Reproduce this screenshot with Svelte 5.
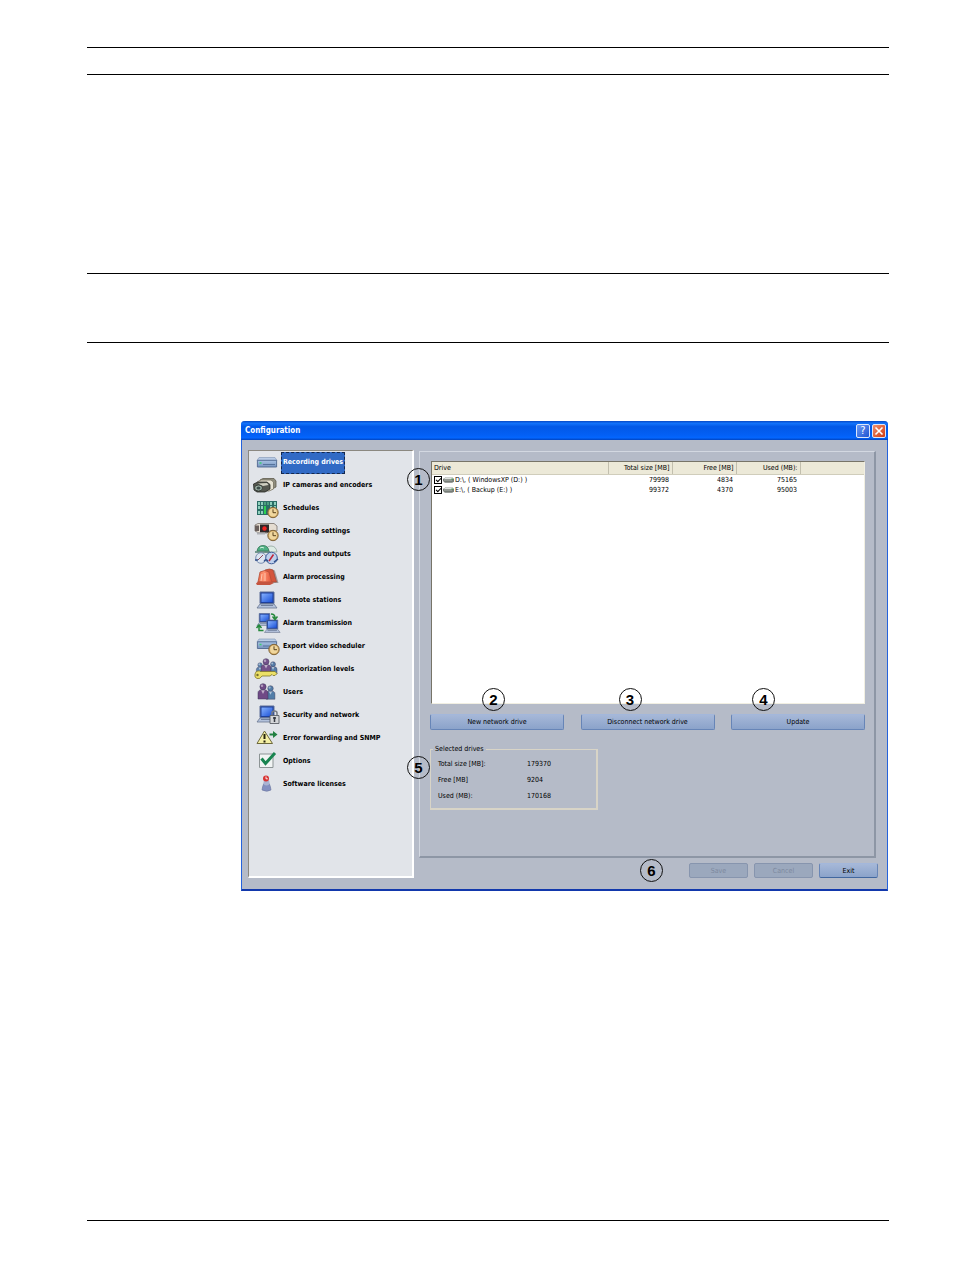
<script>
  const items = [
    ['drive', 'Recording drives'],
    ['cameras', 'IP cameras and encoders'],
    ['schedule', 'Schedules'],
    ['recording', 'Recording settings'],
    ['io', 'Inputs and outputs'],
    ['alarm', 'Alarm processing'],
    ['remote', 'Remote stations'],
    ['transmit', 'Alarm transmission'],
    ['export', 'Export video scheduler'],
    ['auth', 'Authorization levels'],
    ['users', 'Users'],
    ['security', 'Security and network'],
    ['error', 'Error forwarding and SNMP'],
    ['options', 'Options'],
    ['license', 'Software licenses']
  ];
  let selected = $state('drive');
  let drives = $state([
    { name: 'D:\\, ( WindowsXP (D:) )', total: 79998, free: 4834, used: 75165, on: true },
    { name: 'E:\\, ( Backup (E:) )', total: 99372, free: 4370, used: 95003, on: true }
  ]);
  const totals = [
    ['Total size [MB]:', 179370],
    ['Free [MB]', 9204],
    ['Used (MB):', 170168]
  ];
</script>

{#snippet clock(x, y)}
  <g transform="translate({x} {y})">
    <circle r="5.200" fill="#d5ab63" stroke="#80653a" />
    <circle r="3.900" fill="#f0d79e" />
    <path d="M0-3.200V.2H3" fill="none" stroke="#5b431c" />
  </g>
{/snippet}

{#snippet laptop(x, y, s)}
  <g transform="translate({x} {y}) scale({s})">
    <path d="M3 0H17V11.500H3Z" fill="#1d3f9c" stroke="#5d6f98" />
    <path d="M4.500 1.500H15.500V10H4.500Z" fill="url(#screen)" />
    <path d="M3 12H17L20 16H0Z" fill="#b3c2dc" stroke="#6a7690" stroke-width=".8" />
    <path d="M4 13.500H16" stroke="#5f6f8d" stroke-width=".8" />
  </g>
{/snippet}

{#snippet driveBox(y)}
  <g transform="translate(0 {y})">
    <path d="M4 0H20L22 3H2Z" fill="#b9cce6" stroke="#7d93b4" stroke-width=".6" />
    <path d="M2.400 2.800H21.600V9.500H2.400Z" fill="url(#metal)" stroke="#4f688f" stroke-width=".9" />
    <path d="M8 7H20" stroke="#56739c" />
    <path d="M4.500 5.500H6.500" stroke="#36d070" stroke-width="1.500" />
  </g>
{/snippet}

{#snippet person(x, y, s, fill)}
  <g transform="translate({x} {y}) scale({s})">
    <path d="M-4 12V7Q-4 4.500 0 4.500T4 7V12Z" fill={fill} stroke="#3b3556" stroke-width=".4" />
    <circle cy="2.200" r="2.500" fill={fill} stroke="#3b3556" stroke-width=".4" />
    <circle cx="-.8" cy="1.400" r="1" fill="#fff" opacity=".45" />
    <path d="M-1.500 5L0 8L1.500 5Z" fill="#fff" opacity=".55" />
  </g>
{/snippet}

{#snippet icon(name)}
  <svg class="icon" viewBox="-3 0 29 22" aria-hidden="true">
    {#if name === 'drive'}
      {@render driveBox(6.500)}
    {:else if name === 'cameras'}
      <path d="M5 6L8 4.500H19L21 7V13L17 15H7Z" fill="#8f8d7e" stroke="#5f5c4d" stroke-width=".8" />
      <path d="M2 8L6 6H16L18.500 8V15L14 17H5Z" fill="#e6e2d2" stroke="#76715f" stroke-width=".8" />
      <path d="M-1.500 10L3 8H12L15 10.500V15L10 18H2L-1 16Z" fill="#55574f" stroke="#262825" stroke-width=".8" />
      <path d="M3 9.500L12 9L13.500 11L8 12Z" fill="#cfcfc1" />
      <ellipse cx="3.500" cy="14" rx="4" ry="3" fill="#9aaea2" stroke="#2c302c" stroke-width=".8" />
      <ellipse cx="3.500" cy="14" rx="2" ry="1.500" fill="#3c4d4a" />
    {:else if name === 'schedule'}
      <path d="M2 4H22V18H2Z" fill="#2b6d66" />
      <path d="M3 5H5V8H3ZM6 5H8V8H6ZM15 5H17V8H15ZM19 5H21V8H19ZM3 9H5V12H3ZM6 9H8V12H6ZM15 9H17V12H15ZM19 9H21V12H19ZM3 14H5V17H3ZM6 14H8V17H6Z" fill="#8fd0bd" />
      <path d="M9 5H11V8H9ZM12 5H14V8H12Z" fill="#4aa07f" />
      <path d="M9 9H11V17H9Z" fill="#29d052" />
      {@render clock(18, 15.500)}
    {:else if name === 'recording'}
      <path d="M0 5L3 3.500H19L22 6V11H14L12 13H4L0 11Z" fill="#e5ddd2" stroke="#77706a" stroke-width=".8" />
      <path d="M0 5.500H4V11H0Z" fill="#695f5c" />
      <path d="M5 4.500H14V12.500H5Z" fill="#2e2728" />
      <circle cx="9.500" cy="8.500" r="2.200" fill="#f02222" />
      <path d="M2 13.500H10" stroke="#aeb0b5" stroke-width="2" />
      {@render clock(18, 15.500)}
    {:else if name === 'io'}
      <path d="M10 9Q11 3 16 3T22 9Z" fill="#dcebe4" stroke="#8fa49c" stroke-width=".8" />
      <path d="M2 8Q3 2.500 8 2.500T14 8Z" fill="#4fb084" stroke="#397659" stroke-width=".8" />
      <path d="M0 9H15" stroke="#507f70" stroke-width="1.500" />
      <path d="M5 5Q7 3.500 9 5" fill="none" stroke="#d5f4e3" />
      <circle cx="6" cy="15" r="5.300" fill="#dce5f1" stroke="#7d91b3" />
      <circle cx="16.500" cy="15" r="5.800" fill="#bed0ec" stroke="#405e99" />
      <path d="M3 17L8 12" stroke="#8e4b5c" />
      <path d="M14 18L18.500 11.500" stroke="#c22438" stroke-width="1.500" />
      <path d="M9 18.500Q11 15 13 18.500M0 17H3M19 19L23 16" fill="none" stroke="#304f8b" stroke-width="1.500" />
    {:else if name === 'alarm'}
      <path d="M15 17L16 4Q19 3 20 5L23.500 17Z" fill="#a09b9b" />
      <path d="M8 16L10 4Q15 2 18 4L21.500 16Z" fill="#d4553c" stroke="#a24735" stroke-width=".7" />
      <path d="M3 16L5 6Q10 3 14 6L17 17Z" fill="url(#orange)" stroke="#b64e37" stroke-width=".8" />
      <path d="M1 17.500L3 15.500H16L19 17L15 19H2Z" fill="#c4543f" />
      <path d="M7 8L6 15M10 7V15" stroke="#ffc5ac" />
    {:else if name === 'remote'}
      {@render laptop(2, 3, 1)}
    {:else if name === 'transmit'}
      {@render laptop(2, 1.500, 0.75)}
      {@render laptop(9.500, 8, 0.78)}
      <path d="M16 2Q20 2 20 6M17.500 4.500L20 7.500L22.500 4.500M4 14V18.500H8.500M1.500 16L4 13L6.500 16" fill="none" stroke="#24883b" stroke-width="1.500" />
    {:else if name === 'export'}
      {@render driveBox(4)}
      {@render clock(19, 14.500)}
    {:else if name === 'auth'}
      {@render person(5, 5, 0.9, '#5d84ae')}
      {@render person(18, 4, 1, '#547ba7')}
      {@render person(11, 1, 1.200, '#74518a')}
      <path d="M5 13.500H20L22 15.500L20 17.500H18L17 16.500L15 18H7Q5 21.500 2 20.500T0 16T3 13Q5 12.500 5 13.500Z" fill="#ece067" stroke="#81772a" stroke-width=".8" />
      <circle cx="2.500" cy="17" r="1.200" fill="#756c2d" />
    {:else if name === 'users'}
      {@render person(15.500, 5, 1.100, '#527da8')}
      {@render person(8, 3, 1.250, '#704a86')}
    {:else if name === 'security'}
      {@render laptop(2, 2, 1)}
      <path d="M17 12V9Q17 7 19.500 7T22 9V12" fill="none" stroke="#777c84" stroke-width="1.500" />
      <path d="M15 11.500H24V19.500H15Z" fill="#d4d6d9" stroke="#5b6068" stroke-width=".9" />
      <path d="M19.500 13V18M18 14H21" stroke="#353941" stroke-width="1.500" />
    {:else if name === 'error'}
      <path d="M9.500 4L17.500 16.500H2Z" fill="#f5f0a4" stroke="#6d693d" stroke-linejoin="round" />
      <path d="M9.500 7V12M9.500 13.500V15.500" stroke="#25220c" stroke-width="2" />
      <path d="M14.500 7.500H19" stroke="#218041" stroke-width="2" />
      <path d="M18 4L22.500 7.500L18 11Z" fill="#218041" />
    {:else if name === 'options'}
      <path d="M4.500 4H18V17.500H4.500Z" fill="#f1f4f4" stroke="#8c9495" />
      <path d="M6.500 8.500L10.500 13.500L20 3" fill="none" stroke="#188450" stroke-width="3" />
    {:else}
      <path d="M7 17Q8 9 11.500 9T16 17Q12 19.500 7 17Z" fill="#8490c0" stroke="#69759d" stroke-width=".6" />
      <circle cx="11.500" cy="9.500" r="3" fill="#aab3d2" />
      <circle cx="11" cy="5.500" r="3" fill="#d73332" />
      <path d="M11 3.500V5.800H12.800" fill="none" stroke="#fff" stroke-width=".9" />
    {/if}
  </svg>
{/snippet}

<svg class="defs" aria-hidden="true">
  <defs>
    <linearGradient id="screen" x2="1" y2="1"><stop stop-color="#86b2ff" /><stop offset="1" stop-color="#1a50d6" /></linearGradient>
    <linearGradient id="metal" x2="0" y2="1"><stop stop-color="#a9c3e4" /><stop offset="1" stop-color="#7694be" /></linearGradient>
    <linearGradient id="orange"><stop stop-color="#e76a48" /><stop offset=".4" stop-color="#ff9270" /><stop offset="1" stop-color="#de5036" /></linearGradient>
  </defs>
</svg>

<div class="page">
  <header></header>
  <div class="band intro"></div>
  <div class="band note"></div>

  <main class="window">
    <div class="titlebar">
      <h1>Configuration</h1>
      <button class="sys help" aria-label="Help">?</button>
      <button class="sys close" aria-label="Close">
        <svg viewBox="0 0 12 12"><path d="M2.500 2.500L9.500 9.500M9.500 2.500L2.500 9.500" stroke="#fff" stroke-width="1.600" /></svg>
      </button>
    </div>
    <div class="content">
      <nav>
        {#each items as [id, label]}
          <button class="item" class:selected={selected === id} onclick={() => (selected = id)}>
            {@render icon(id)}<span>{label}</span>
          </button>
        {/each}
      </nav>
      <div class="side">
        <section class="panel">
          <div class="list">
            <b class="callout c1">1</b>
            <table>
              <thead>
                <tr><th>Drive</th><th class="num">Total size [MB]</th><th class="num">Free [MB]</th><th class="num">Used (MB):</th><th class="rest"></th></tr>
              </thead>
              <tbody>
                {#each drives as d}
                  <tr>
                    <td>
                      <label>
                        <input type="checkbox" bind:checked={d.on} />
                        <svg class="disk" viewBox="0 0 12 8" aria-hidden="true">
                          <path d="M3 1H10L12 3V6L10 7H2L0 5V3Z" fill="#777d78" />
                          <path d="M3 1H10L11 3H1Z" fill="#dfe3df" />
                          <path d="M1 4H10" stroke="#b8bdb8" />
                          <path d="M9 3H11" stroke="#35a24a" />
                        </svg>
                        {d.name}
                      </label>
                    </td>
                    <td>{d.total}</td><td>{d.free}</td><td>{d.used}</td><td></td>
                  </tr>
                {/each}
              </tbody>
            </table>
          </div>
          <div class="actions">
            <div><b class="callout c2">2</b><button class="btn">New network drive</button></div>
            <div><b class="callout c3">3</b><button class="btn">Disconnect network drive</button></div>
            <div><b class="callout c4">4</b><button class="btn">Update</button></div>
          </div>
          <fieldset>
            <legend>Selected drives</legend>
            <b class="callout c5">5</b>
            <dl>
              {#each totals as [k, v]}
                <dt>{k}</dt><dd>{v}</dd>
              {/each}
            </dl>
          </fieldset>
        </section>
        <footer>
          <b class="callout c6">6</b>
          <button class="btn" disabled>Save</button>
          <button class="btn" disabled>Cancel</button>
          <button class="btn exit">Exit</button>
        </footer>
      </div>
    </div>
  </main>
  <div class="pagefoot"></div>
</div>

<style>
  :global(body) { margin: 0; background: #fff; }
  * { box-sizing: border-box; }
  .defs { position: absolute; width: 0; height: 0; }
  .page {
    min-height: 100vh;
    padding: 47px 65px 52px 87px;
    display: flex;
    flex-direction: column;
    font: 7px/10px "DejaVu Sans Condensed", "DejaVu Sans", sans-serif;
    color: #000;
  }
  header { height: 28px; border: solid #000; border-width: 1px 0; }
  .band { border-bottom: 1px solid #000; }
  .intro { height: 199px; }
  .note { height: 69px; }
  .pagefoot { margin-top: auto; border-top: 1px solid #000; }
  button { font: inherit; color: inherit; }

  .window {
    margin: 78px 1px 40px 154px;
    background: #b5bbc8;
    border: 1px solid #2462dc;
    border-top: 0;
    border-bottom: 2px solid #1238ac;
    border-radius: 4px 4px 0 0;
  }
  .titlebar {
    display: flex;
    align-items: center;
    gap: 2px;
    height: 19px;
    margin: 0 -1px;
    padding: 0 2px 0 4px;
    border-radius: 4px 4px 0 0;
    background: linear-gradient(#0648c4, #1273fb 12%, #0258e6 30%, #0360f6 75%, #0366ff 88%, #0144c0);
  }
  h1 { flex: 1; margin: 0; font-size: 8px; line-height: 12px; color: #fff; }
  .sys {
    display: grid;
    place-items: center;
    width: 14px;
    height: 14px;
    padding: 0;
    border: 1px solid #dce7fb;
    border-radius: 2px;
    color: #fff;
    background: linear-gradient(135deg, #6c9af4, #1f55d2);
  }
  .help { font-size: 11px; line-height: 12px; }
  .close { background: linear-gradient(135deg, #f09070, #d03c12); }
  .close svg { width: 12px; height: 12px; }

  .content { display: flex; gap: 5px; padding: 10px 9px 11px 6px; }
  nav {
    flex: 0 0 166px;
    padding: 0 0 80px 3px;
    background: #e1e4e9;
    border: 1px solid #fff;
    border-top-color: #8b8880;
    border-left-color: #8b8880;
    border-right-width: 2px;
    border-bottom-width: 2px;
  }
  .item {
    display: flex;
    align-items: center;
    width: 100%;
    height: 23px;
    padding: 0;
    border: 0;
    background: none;
    font-weight: bold;
    text-align: left;
  }
  .icon { flex: none; width: 29px; height: 22px; margin-bottom: 2px; }
  .item span { padding: 4px 1px 6px; border: 1px dotted transparent; white-space: nowrap; }
  .selected span { color: #fff; background: #316ac5; border: 1px dashed #14284e; }

  .side { flex: 1; min-width: 0; display: flex; flex-direction: column; }
  .panel {
    flex: 1;
    margin: 1px 2px 0 0;
    padding: 9px 9px 0 10px;
    border: 1px solid #d3d8e1;
    border-right: 2px solid #8d96a5;
    border-bottom: 2px solid #8d96a5;
  }
  .list {
    position: relative;
    height: 243px;
    margin-left: 1px;
    background: #fff;
    border: 1px solid #f1efe2;
    border-top-color: #777468;
    border-left-color: #777468;
  }
  table { width: 100%; border-collapse: collapse; table-layout: fixed; }
  th {
    height: 12px;
    padding: 0 2px;
    font-weight: normal;
    text-align: left;
    background: #ece9d8;
    border-right: 1px solid #c2bfae;
    border-bottom: 1px solid #d0cdbb;
    white-space: nowrap;
  }
  th.num { width: 64px; text-align: right; }
  th.rest { width: 64px; border-right: 0; }
  td { height: 10px; padding: 0 3px; text-align: right; white-space: nowrap; }
  td:first-child { padding: 0 2px; text-align: left; }
  label { display: flex; align-items: center; gap: 1px; height: 10px; }
  input {
    appearance: none;
    display: grid;
    place-items: center;
    width: 8px;
    height: 8px;
    margin: 0;
    border: 1px solid #000;
    background: #fff;
  }
  input:checked::before {
    content: "";
    width: 4px;
    height: 2px;
    border: solid #000;
    border-width: 0 0 1px 1px;
    transform: rotate(-45deg);
  }
  .disk { width: 11px; height: 8px; }

  .actions { display: flex; justify-content: space-between; margin-top: 10px; }
  .actions div { position: relative; flex: 0 1 134px; }
  .btn {
    width: 100%;
    height: 16px;
    padding: 0;
    line-height: 12px;
    border: 1px solid #6785b7;
    border-top-color: #a3b7db;
    border-radius: 2px;
    background: linear-gradient(#a6b8d8, #8ba3ca);
  }
  fieldset {
    position: relative;
    width: 168px;
    margin: 14px 0 0;
    padding: 2px 7px 4px;
    border: 1px solid #d8d4c7;
    border-right-width: 2px;
    border-bottom-width: 2px;
  }
  legend { padding: 0 2px; margin-left: -5px; }
  dl { display: grid; grid-template-columns: 89px 1fr; margin: 0; line-height: 16px; }
  dd { margin: 0; }

  footer { display: flex; align-items: center; justify-content: flex-end; gap: 6px; height: 15px; margin-top: 5px; }
  footer .btn { width: 59px; height: 15px; }
  .btn:disabled { color: #7d899d; border-color: #8795ae; background: #9ba8bd; }
  .btn.exit { border-bottom-color: #41679f; }

  .callout {
    position: absolute;
    display: grid;
    place-items: center;
    width: 23px;
    height: 23px;
    border: 1px solid #111;
    border-radius: 50%;
    font: bold 15px/16px "Liberation Sans", Arial, sans-serif;
  }
  .c1 { left: -25px; top: 6px; }
  .c2 { left: 52px; top: -26px; }
  .c3 { left: 38px; top: -26px; }
  .c4 { left: 21px; top: -26px; }
  .c5 { left: -24px; top: 2px; }
  .c6 { position: static; margin-right: 20px; }
</style>
